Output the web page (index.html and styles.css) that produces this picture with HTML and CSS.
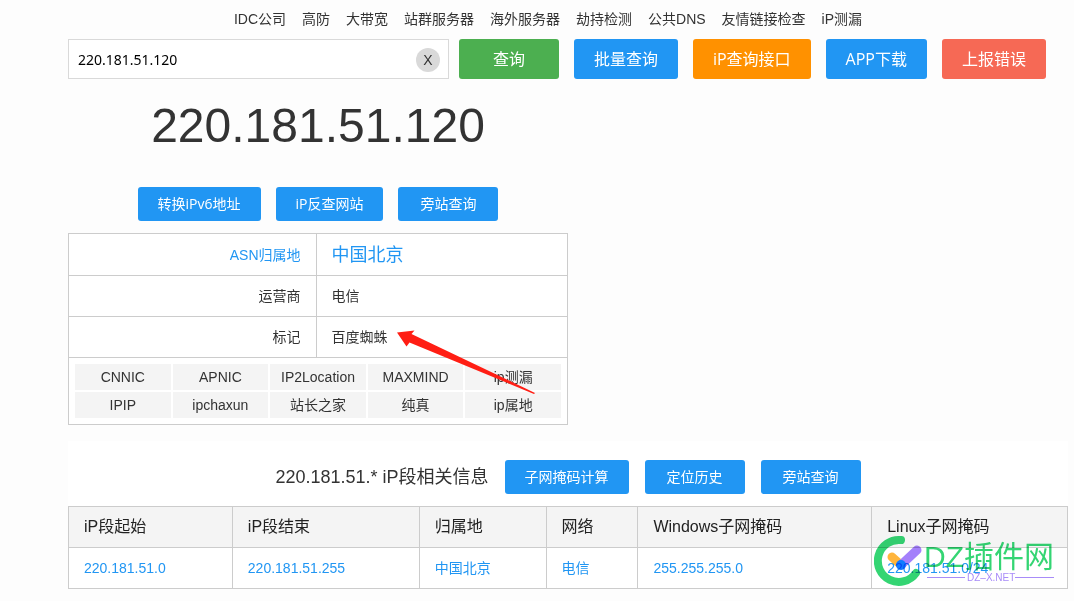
FILE: index.html
```html
<!DOCTYPE html>
<html lang="zh-CN">
<head>
<meta charset="utf-8">
<meta name="viewport" content="width=device-width, initial-scale=1">
<title>220.181.51.120 iP查询</title>
<link rel="stylesheet" href="styles.css">
</head>
<body>
<div class="page">
  <header>
    <nav class="links">
      <a href="#">IDC公司</a>
      <a href="#">高防</a>
      <a href="#">大带宽</a>
      <a href="#">站群服务器</a>
      <a href="#">海外服务器</a>
      <a href="#">劫持检测</a>
      <a href="#">公共DNS</a>
      <a href="#">友情链接检查</a>
      <a href="#">iP测漏</a>
    </nav>
    <form class="search">
      <div class="field">
        <input class="field-input" type="text" value="220.181.51.120" aria-label="iP地址">
        <button class="clear" type="button">X</button>
      </div>
      <div class="actions">
        <button class="btn btn-large btn-green" type="button">查询</button>
        <button class="btn btn-large" type="button">批量查询</button>
        <button class="btn btn-large btn-orange" type="button">iP查询接口</button>
        <button class="btn btn-large" type="button">APP下载</button>
        <button class="btn btn-large btn-red" type="button">上报错误</button>
      </div>
    </form>
  </header>

  <main>
    <section class="result">
      <h1 class="ip">220.181.51.120</h1>
      <div class="tools">
        <button class="btn" type="button">转换iPv6地址</button>
        <button class="btn" type="button">iP反查网站</button>
        <button class="btn" type="button">旁站查询</button>
      </div>
      <table class="grid info">
        <colgroup>
          <col class="c-label"><col>
        </colgroup>
        <tbody>
          <tr><th class="place-cell" scope="row"><a href="#">ASN归属地</a></th><td class="place-cell place"><a href="#">中国北京</a></td></tr>
          <tr><th scope="row">运营商</th><td>电信</td></tr>
          <tr><th scope="row">标记</th><td>百度蜘蛛</td></tr>
          <tr>
            <td class="sources-cell" colspan="2">
              <div class="sources">
                <span>CNNIC</span><span>APNIC</span><span>IP2Location</span><span>MAXMIND</span><span>ip测漏</span>
                <span>IPIP</span><span>ipchaxun</span><span>站长之家</span><span>纯真</span><span>ip属地</span>
              </div>
            </td>
          </tr>
        </tbody>
      </table>
      <svg class="arrow" width="140" height="65" viewBox="0 0 140 65" aria-hidden="true">
        <path fill="#ff1e14" d="M0 2.500 L17.500 0.500 L14.500 4 L138 63 L137 64 L12.500 12.500 L9.500 16.500 Z"/>
      </svg>
    </section>

    <section class="range">
      <div class="range-head">
        <h2 class="range-title">220.181.51.* iP段相关信息</h2>
        <button class="btn" type="button">子网掩码计算</button>
        <button class="btn" type="button">定位历史</button>
        <button class="btn" type="button">旁站查询</button>
      </div>
      <table class="grid segments">
        <colgroup>
          <col class="c-start"><col class="c-end"><col class="c-place"><col class="c-net"><col class="c-win"><col class="c-linux">
        </colgroup>
        <thead>
          <tr><th>iP段起始</th><th>iP段结束</th><th>归属地</th><th>网络</th><th>Windows子网掩码</th><th>Linux子网掩码</th></tr>
        </thead>
        <tbody>
          <tr>
            <td><a href="#">220.181.51.0</a></td>
            <td><a href="#">220.181.51.255</a></td>
            <td><a href="#">中国北京</a></td>
            <td><a href="#">电信</a></td>
            <td><a href="#">255.255.255.0</a></td>
            <td><a href="#">220.181.51.0/24</a></td>
          </tr>
        </tbody>
      </table>
      <svg class="mark" width="184" height="54" viewBox="0 0 184 54" role="img" aria-label="DZ插件网">
        <path d="M27 5 A21 21 0 1 0 42 38" fill="none" stroke="#34d573" stroke-width="8" stroke-linecap="round"/>
        <path d="M18 22 L27 30" stroke="#ffb53c" stroke-width="9" stroke-linecap="round"/>
        <path d="M27 30 L43 15" stroke="#a480fb" stroke-width="9" stroke-linecap="round"/>
        <circle cx="27" cy="30" r="5" fill="#0f7cff"/>
        <text class="mark-name" x="50" y="32">DZ插件网</text>
        <path d="M53 42.500H91M141 42.500H180" stroke="#a88cf8" stroke-width="1"/>
        <text class="mark-site" x="93" y="46">DZ–X.NET</text>
      </svg>
    </section>
  </main>
</div>
</body>
</html>
```
FILE: styles.css
```css
* {
  box-sizing: border-box;
}

body {
  margin: 0;
  background: #fdfdfd;
  color: #333;
  font: 14px/20px "Liberation Sans", "Noto Sans CJK SC", sans-serif;
}

a {
  color: #2196f3;
  text-decoration: none;
}

button,
input {
  font-family: "Open Sans", "Noto Sans CJK SC", sans-serif;
}

.page {
  padding: 9px 6px 12px 68px;
}

.links {
  display: flex;
  justify-content: center;
  gap: 16px;
  padding-right: 40px;
}

.links a {
  color: #333;
  white-space: nowrap;
}

.search {
  display: flex;
  gap: 10px;
  margin-top: 10px;
  padding-right: 22px;
}

.field {
  position: relative;
  flex: 1;
  min-width: 0;
}

.field-input {
  display: block;
  width: 100%;
  height: 40px;
  padding: 0 40px 0 9px;
  border: 1px solid #d9d9d9;
  background: #fff;
  color: #000;
  font-family: "Noto Sans", "Noto Sans CJK SC", sans-serif;
  font-size: 14px;
}

.clear {
  position: absolute;
  top: 9px;
  right: 9px;
  width: 24px;
  height: 24px;
  padding: 0;
  border: 0;
  border-radius: 50%;
  background: #d9d9d9;
  color: #333;
  font-size: 14px;
  font-family: "Liberation Sans", sans-serif;
}

.actions {
  display: flex;
  gap: 15px;
}

.btn {
  min-width: 100px;
  height: 34px;
  padding: 0 20px;
  border: 0;
  border-radius: 3px;
  background: #2196f3;
  color: #fff;
  font-size: 14px;
  line-height: 20px;
  white-space: nowrap;
}

.btn-large {
  height: 40px;
  font-size: 16px;
}

.btn-green {
  background: #4caf50;
}

.btn-orange {
  background: #ff9100;
}

.btn-red {
  background: #f66955;
}

.result {
  position: relative;
  width: 50%;
}

.ip {
  margin: 0;
  padding: 15px 0 29px;
  font-size: 48px;
  font-weight: 400;
  line-height: 64px;
  text-align: center;
}

.tools {
  display: flex;
  justify-content: center;
  gap: 15px;
  margin-bottom: 12px;
}

.grid {
  width: 100%;
  border-collapse: collapse;
  table-layout: fixed;
  background: #fff;
}

.grid th,
.grid td {
  height: 41px;
  padding: 0 15px;
  border: 1px solid #ccc;
  font-weight: 400;
  text-align: left;
}

.info th {
  text-align: right;
}

.c-label {
  width: 49.6%;
}

.info .place-cell {
  height: 42px;
}

.info .place {
  font-size: 18px;
}

.info .sources-cell {
  padding: 6px;
}

.sources {
  display: grid;
  grid-template-columns: repeat(5, 1fr);
  gap: 2px;
}

.sources span {
  background: #f4f4f4;
  line-height: 26px;
  text-align: center;
}

.arrow {
  position: absolute;
  left: 329px;
  bottom: 30px;
}

.range {
  position: relative;
  margin-top: 16px;
  padding-top: 19px;
  background: #fff;
}

.range-head {
  display: flex;
  align-items: center;
  justify-content: center;
  gap: 16px;
  margin-bottom: 12px;
}

.range-title {
  margin: 0;
  font-size: 18px;
  font-weight: 400;
}

.segments th {
  background: #f4f4f4;
  color: #222;
  font-size: 16px;
}

.c-start {
  width: 16.4%;
}

.c-end {
  width: 18.7%;
}

.c-place {
  width: 12.7%;
}

.c-net {
  width: 9.2%;
}

.c-win {
  width: 23.4%;
}

.c-linux {
  width: 19.6%;
}

.mark {
  position: absolute;
  right: 10px;
  bottom: 0;
  mix-blend-mode: multiply;
}

.mark-name {
  fill: #34d573;
  font-size: 30px;
}

.mark-site {
  fill: #a88cf8;
  font-size: 10px;
}
```
